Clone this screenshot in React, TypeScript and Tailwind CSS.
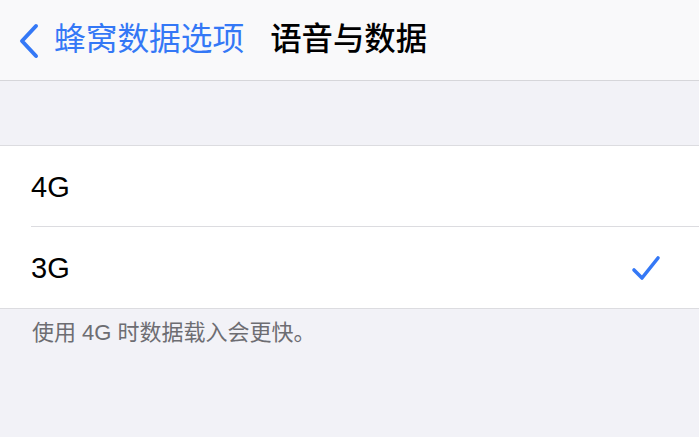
import React from "react";

const font = { fontFamily: '"Liberation Sans", "Noto Sans CJK SC", sans-serif' };

const Row = ({ label, checked, last }: { label: string; checked?: boolean; last?: boolean }) => (
  <div className="pl-[31px] bg-white">
    <div className={`h-[81px] flex items-center justify-between pr-[38px] ${last ? "" : "border-b border-[#dcdce0]"}`}>
      <span className="text-[29px] text-black leading-none mt-[2px]">{label}</span>
      {checked && (
        <svg width="30" height="28" viewBox="0 0 30 28" fill="none">
          <path d="M3 16 L11 24 L27 4" stroke="#3478F6" strokeWidth="3.6" strokeLinecap="round" strokeLinejoin="round" />
        </svg>
      )}
    </div>
  </div>
);

const App = () => {
  return (
    <div className="w-[699px] h-[437px] bg-[#f2f2f7] overflow-hidden" style={font}>
      <div className="h-[81px] bg-[#f9f9fa] border-b border-[#d6d6da] flex items-center pl-[18px]">
        <svg width="22" height="36" viewBox="0 0 22 36" fill="none" className="mr-[14px] mt-[2px]">
          <path d="M18 3 L4 18 L18 33" stroke="#3478F6" strokeWidth="4" strokeLinecap="round" strokeLinejoin="round" />
        </svg>
        <span className="text-[31.7px] text-[#3478F6] leading-none">蜂窝数据选项</span>
        <span className="text-[31.4px] text-black font-medium leading-none ml-[26px]">语音与数据</span>
      </div>
      <div className="h-[64px]" />
      <div className="border-y border-[#dcdce0]">
        <Row label="4G" />
        <Row label="3G" checked last />
      </div>
      <p className="pl-[32px] pt-[11px] text-[22px] leading-[26px] text-[#6d6d72]">使用 4G 时数据载入会更快。</p>
    </div>
  );
};

export default App;
